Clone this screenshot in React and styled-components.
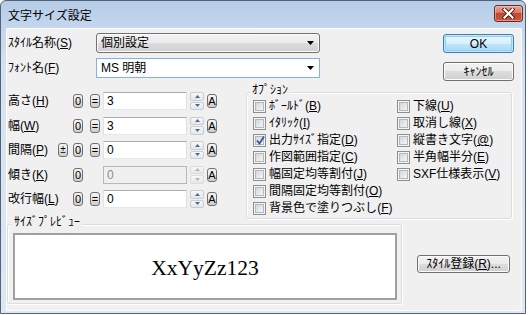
import React from 'react'
import styled, { createGlobalStyle } from 'styled-components'

const GlobalStyle = createGlobalStyle`
  html, body {
    margin: 0;
    padding: 0;
    background: #ffffff;
  }
  body {
    font-family: "Liberation Sans", "Noto Sans CJK JP", sans-serif;
    font-size: 12px;
    color: #000000;
  }
  u {
    text-underline-offset: 1px;
  }
`

// Window frame
const Window = styled.div`
  width: 526px;
  height: 314px;
  box-sizing: border-box;
  border: 1px solid #52637a;
  border-radius: 6px 6px 0 0;
  background: linear-gradient(#b6cce7 0px, #c3d6ed 26px, #d5e2f1 70px, #dee7f2 100%);
  display: flex;
  flex-direction: column;
  overflow: hidden;
`

const TitleBar = styled.div`
  height: 27px;
  flex: none;
  display: flex;
  align-items: flex-start;
  padding: 0 2px 0 7px;
`

const Title = styled.div`
  flex: 1;
  margin-top: 8px;
  line-height: 14px;
`

const CloseButton = styled.div`
  margin-top: 4px;
  width: 29px;
  height: 17px;
  box-sizing: border-box;
  border: 1px solid #6e2a22;
  border-radius: 3px;
  background: linear-gradient(#e6a594 0%, #d57a67 45%, #c2452f 50%, #c95a42 100%);
  box-shadow: inset 0 0 0 1px rgba(255, 220, 210, 0.45);
  display: flex;
  align-items: center;
  justify-content: center;
`

const Body = styled.div`
  flex: 1;
  display: flex;
  padding: 0 3px 2px 5px;
`

const Client = styled.div`
  flex: 1;
  border: 1px solid #fbfcfe;
  background: #f0f0f0;
  padding: 4px 7px 0 0;
  display: flex;
  flex-direction: column;
`

// Top part: style name / font name / OK / cancel
const TopRow = styled.div`
  display: flex;
  justify-content: space-between;
  align-items: flex-start;
`

const FieldStack = styled.div`
  display: grid;
  grid-template-columns: 88px 224px;
  grid-auto-rows: 20px;
  row-gap: 5px;
  align-items: center;
  padding-left: 1px;
`

const Label = styled.span`
  line-height: 14px;
  white-space: nowrap;
`

const Combo = styled.div`
  height: 20px;
  box-sizing: border-box;
  display: flex;
  align-items: center;
  justify-content: space-between;
  padding: 0 5px 0 4px;
  border-radius: ${p => (p.$edit ? '0' : '3px')};
  border: 1px solid ${p => (p.$edit ? '#7eb4ea' : '#707070')};
  background: ${p =>
    p.$edit ? '#ffffff' : 'linear-gradient(#f2f2f2 0%, #ebebeb 50%, #dddddd 50%, #cfcfcf 100%)'};
  box-shadow: ${p => (p.$edit ? 'none' : 'inset 0 0 0 1px #fcfcfc')};
  line-height: 14px;
`

const ButtonStack = styled.div`
  display: flex;
  flex-direction: column;
  gap: 9px;
  margin-top: 1px;
`

const PushButton = styled.div`
  width: ${p => p.$w || 71}px;
  height: ${p => p.$h || 19}px;
  box-sizing: border-box;
  border-radius: 3px;
  border: 1px solid ${p => (p.$default ? '#3c7fb1' : '#707070')};
  background: ${p =>
    p.$default
      ? 'linear-gradient(#eaf6fd 0%, #d9f0fc 50%, #bee6fd 50%, #a7d9f5 100%)'
      : 'linear-gradient(#f2f2f2 0%, #ebebeb 50%, #dddddd 50%, #cfcfcf 100%)'};
  box-shadow: ${p =>
    p.$default ? 'inset 0 0 0 1px #c4e8fb, inset 0 0 0 2px #8fd0f4' : 'inset 0 0 0 1px #fcfcfc'};
  display: flex;
  align-items: center;
  justify-content: center;
  line-height: 14px;
  white-space: nowrap;
`

// Middle part: numeric parameters and options
const MiddleRow = styled.div`
  display: flex;
  align-items: flex-start;
  margin-top: 11px;
`

const Params = styled.div`
  display: grid;
  grid-template-columns: 50px 15px 17px 13px 87px 17px 10px;
  grid-auto-rows: 18px;
  row-gap: 6.5px;
  align-items: center;
  padding-left: 1px;
`

const SmallButton = styled.div`
  width: 10px;
  height: 14px;
  box-sizing: border-box;
  border: 1px solid #707070;
  border-radius: 3px;
  background: linear-gradient(#f2f2f2 0%, #ebebeb 50%, #dddddd 50%, #cfcfcf 100%);
  font-size: ${p => (p.$small ? 10 : 11)}px;
  line-height: 12px;
  display: flex;
  justify-content: center;
`

const NumberInput = styled.div`
  width: 84px;
  height: 18px;
  box-sizing: border-box;
  border: 1px solid;
  border-color: ${p => (p.$disabled ? '#b5b9bd' : '#abadb3 #dbdfe6 #e3e9ef #e2e3ea')};
  background: ${p => (p.$disabled ? '#f0f0f0' : '#ffffff')};
  color: ${p => (p.$disabled ? '#8a8a8a' : '#000000')};
  padding-left: 3px;
  line-height: 16px;
`

const Spinner = styled.div`
  width: 14px;
  height: 18px;
  display: flex;
  flex-direction: column;
  gap: 1px;
`

const SpinHalf = styled.div`
  flex: 1;
  border: 1px solid ${p => (p.$disabled ? '#dcdcdc' : '#c8cdd3')};
  border-radius: 2px;
  background: linear-gradient(#f7f7f7, #e4e7ea);
  display: flex;
  align-items: center;
  justify-content: center;
`

const GroupBox = styled.div`
  position: relative;
  box-sizing: border-box;
  width: ${p => p.$w}px;
  height: ${p => p.$h}px;
  margin-left: ${p => p.$ml || 0}px;
  border: 1px solid #d5dfe5;
  border-radius: 3px;
  box-shadow: inset 1px 1px 0 #ffffff, 1px 1px 0 #ffffff;
`

const GroupLabel = styled.span`
  position: absolute;
  top: -10px;
  left: ${p => p.$left}px;
  padding: 0 2px;
  background: #f0f0f0;
  line-height: 14px;
  white-space: nowrap;
`

const OptionGrid = styled.div`
  display: grid;
  grid-template-columns: 144px 1fr;
  grid-template-rows: repeat(7, 17px);
  grid-auto-flow: column;
  padding: 4.5px 0 0 6px;
`

const CheckRow = styled.label`
  display: flex;
  align-items: center;
  gap: 3px;
  line-height: 14px;
  white-space: nowrap;
`

const CheckBox = styled.span`
  width: 13px;
  height: 13px;
  box-sizing: border-box;
  border: 1px solid #8e8f8f;
  background: #f4f4f4;
  display: flex;
  align-items: center;
  justify-content: center;
  position: relative;

  &::before {
    content: '';
    width: 7px;
    height: 7px;
    border: 1px solid #b3b8bd;
    background: linear-gradient(135deg, #d3d6da, #f6f6f6);
  }
`

const CheckMark = styled.svg`
  position: absolute;
  left: 1px;
  top: 0px;
`

// Bottom part: preview and register button
const BottomRow = styled.div`
  display: flex;
  align-items: center;
  margin-top: 5px;
`

const PreviewBox = styled.div`
  margin: 8px 4px 3px 5px;
  height: 67px;
  box-sizing: border-box;
  border: 2px solid #a0a0a0;
  background: #ffffff;
  display: flex;
  align-items: center;
  justify-content: center;
  font-family: "Liberation Serif", serif;
  font-size: 21.5px;
  padding-top: 3px;
`

const ArrowDown = ({ color = '#000' }) => (
  <svg width="7" height="4" viewBox="0 0 7 4">
    <polygon points="0,0 7,0 3.5,4" fill={color} />
  </svg>
)

const SpinArrow = ({ up, disabled }) => (
  <svg width="5" height="3" viewBox="0 0 5 3">
    <polygon points={up ? '0,3 5,3 2.5,0' : '0,0 5,0 2.5,3'} fill={disabled ? '#b5b5b5' : '#4d6a96'} />
  </svg>
)

const Key = ({ children }) => <u>{children}</u>

const params = [
  { label: '高さ', key: 'H', value: '3', eq: true },
  { label: '幅', key: 'W', value: '3', eq: true },
  { label: '間隔', key: 'P', value: '0', eq: true, pm: true },
  { label: '傾き', key: 'K', value: '0', disabled: true },
  { label: '改行幅', key: 'L', value: '0', eq: true },
]

const options = [
  { text: 'ﾎﾞｰﾙﾄﾞ', key: 'B' },
  { text: 'ｲﾀﾘｯｸ', key: 'I' },
  { text: '出力ｻｲｽﾞ指定', key: 'D', checked: true },
  { text: '作図範囲指定', key: 'C' },
  { text: '幅固定均等割付', key: 'J' },
  { text: '間隔固定均等割付', key: 'O' },
  { text: '背景色で塗りつぶし', key: 'F' },
  { text: '下線', key: 'U' },
  { text: '取消し線', key: 'X' },
  { text: '縦書き文字', key: '@' },
  { text: '半角幅半分', key: 'E' },
  { text: 'SXF仕様表示', key: 'V' },
]

const App = () => (
  <>
    <GlobalStyle />
    <Window>
      <TitleBar>
        <Title>文字サイズ設定</Title>
        <CloseButton>
          <svg width="13" height="11" viewBox="0 0 13 11">
            <path d="M2.5 1.5 L10.5 9.5 M10.5 1.5 L2.5 9.5" stroke="#4a1a14" strokeWidth="4" strokeLinecap="square" />
            <path d="M2.5 1.5 L10.5 9.5 M10.5 1.5 L2.5 9.5" stroke="#ffffff" strokeWidth="2.2" strokeLinecap="square" />
          </svg>
        </CloseButton>
      </TitleBar>
      <Body>
        <Client>
          <TopRow>
            <FieldStack>
              <Label>ｽﾀｲﾙ名称(<Key>S</Key>)</Label>
              <Combo>
                <span>個別設定</span>
                <ArrowDown />
              </Combo>
              <Label>ﾌｫﾝﾄ名(<Key>F</Key>)</Label>
              <Combo $edit>
                <span>MS 明朝</span>
                <ArrowDown />
              </Combo>
            </FieldStack>
            <ButtonStack>
              <PushButton $default>OK</PushButton>
              <PushButton>ｷｬﾝｾﾙ</PushButton>
            </ButtonStack>
          </TopRow>

          <MiddleRow>
            <Params>
              {params.map(p => (
                <React.Fragment key={p.key}>
                  <Label>
                    {p.label}(<Key>{p.key}</Key>)
                  </Label>
                  <span>{p.pm && <SmallButton $small>±</SmallButton>}</span>
                  <span>
                    <SmallButton>0</SmallButton>
                  </span>
                  <span>{p.eq && <SmallButton>=</SmallButton>}</span>
                  <NumberInput $disabled={p.disabled}>{p.value}</NumberInput>
                  <Spinner>
                    <SpinHalf $disabled={p.disabled}>
                      <SpinArrow up disabled={p.disabled} />
                    </SpinHalf>
                    <SpinHalf $disabled={p.disabled}>
                      <SpinArrow disabled={p.disabled} />
                    </SpinHalf>
                  </Spinner>
                  <SmallButton>A</SmallButton>
                </React.Fragment>
              ))}
            </Params>

            <GroupBox $w={266} $h={127} $ml={29}>
              <GroupLabel $left={3}>ｵﾌﾟｼｮﾝ</GroupLabel>
              <OptionGrid>
                {options.map(o => (
                  <CheckRow key={o.key}>
                    <CheckBox>
                      {o.checked && (
                        <CheckMark width="11" height="11" viewBox="0 0 11 11">
                          <path d="M2 5.5 L4.5 8.5 L9 1.5" fill="none" stroke="#3a52a0" strokeWidth="1.8" />
                        </CheckMark>
                      )}
                    </CheckBox>
                    <span>
                      {o.text}(<Key>{o.key}</Key>)
                    </span>
                  </CheckRow>
                ))}
              </OptionGrid>
            </GroupBox>
          </MiddleRow>

          <BottomRow>
            <GroupBox $w={395} $h={80}>
              <GroupLabel $left={4}>ｻｲｽﾞﾌﾟﾚﾋﾞｭｰ</GroupLabel>
              <PreviewBox>XxYyZz123</PreviewBox>
            </GroupBox>
            <PushButton $w={93} $h={18} style={{ marginLeft: 15 }}>
              ｽﾀｲﾙ登録(<Key>R</Key>)...
            </PushButton>
          </BottomRow>
        </Client>
      </Body>
    </Window>
  </>
)

export default App
